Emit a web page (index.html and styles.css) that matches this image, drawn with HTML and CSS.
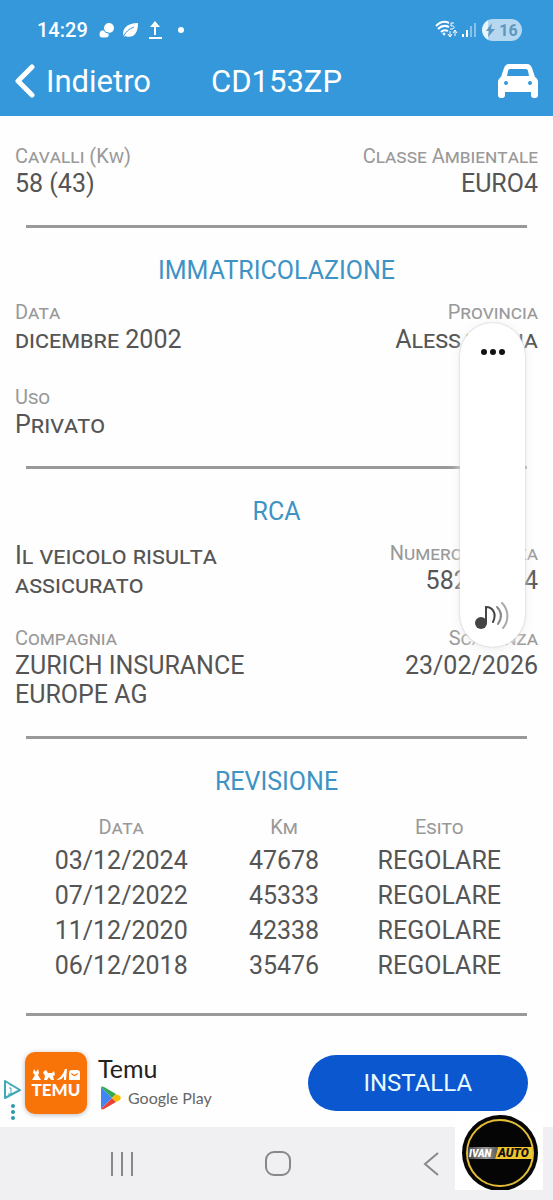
FILE: index.html
```
<!doctype html>
<html lang="it">
<head>
	<meta charset="UTF-8">
	<meta name="viewport" content="width=device-width,initial-scale=1.0">
	<title>CD153ZP</title>
	<link rel="stylesheet" href="styles.css">
</head>
<body>
	<header class="head">
		<div class="status">
			<span class="time">14:29</span>
			<svg class="status_icons" width="88" height="22" viewBox="0 0 88 22" fill="#fff">
				<circle cx="11" cy="9" r="5"/>
				<path d="M1 15a4 4 0 0 1 5-4c1 2 2 3 5 3 1 3-1 5-3 5H4c-2 0-3-2-3-4z" stroke="#3498db" stroke-width="1"/>
				<path d="M26 18c-3-7 2-14 14-14 0 11-5 16-13 13z"/>
				<path d="M25 19c2-6 6-9 11-11" fill="none" stroke="#3498db" stroke-width="1"/>
				<path d="M51 18h13v2H51zM56 16V8h-4l5-6 5 6h-4v8z"/>
				<circle cx="83" cy="11" r="3"/>
			</svg>
			<svg class="signal" width="42" height="22" viewBox="0 0 42 22" fill="none" stroke="#fff">
				<path d="M1 7c4-4 9-5 13-3M3 10c3-3 7-4 11-2M6 13c2-2 5-2 7-1" stroke-width="2"/>
				<circle cx="9" cy="15" r="1" fill="#fff"/>
				<path d="M19 4h-3v3c4-1 4 3 1 3h-2" stroke-width="1"/>
				<path d="M15 12v6M13 15l2 3 2-3M20 17v-5M18 14l2-3 2 3" stroke-width="1"/>
				<path d="M28 15v3M32 11v7" stroke-width="2"/>
				<path d="M36 7v11M40 4v14" stroke-width="2" opacity=".4"/>
			</svg>
			<span class="battery">
				<svg width="9" height="14" viewBox="0 0 9 14"><path d="M6 0L0 8h3l-1 6 7-8H5z" fill="#5d97bd"/></svg>
				16
			</span>
		</div>
		<nav class="bar">
			<a href="#" class="back">
				<svg width="20" height="34" viewBox="0 0 20 34"><path d="M17 3L3 17l14 14" fill="none" stroke="#fff" stroke-width="5" stroke-linecap="round" stroke-linejoin="round"/></svg>
				Indietro
			</a>
			<h1 class="plate">CD153ZP</h1>
			<button class="car" aria-label="Veicolo">
				<svg width="40" height="36" viewBox="0 0 40 36">
					<path fill="#fff" fill-rule="evenodd" d="M11 1h18c3 0 4 2 5 4l3 9c2 1 3 3 3 5v13c0 2-1 3-3 3h-1c-2 0-3-1-3-3v-3H7v3c0 2-1 3-3 3H3c-2 0-3-1-3-3V19c0-2 1-4 3-5l3-9c1-2 2-4 5-4zM12 6c-1 0-2 1-2 2l-1 5h22l-1-5c0-1-1-2-2-2zM8 18a2 2 0 1 0 0 4 2 2 0 0 0 0-4zM32 18a2 2 0 1 0 0 4 2 2 0 0 0 0-4z"/>
				</svg>
			</button>
		</nav>
	</header>

	<main class="content">
		<section class="block">
			<dl class="row">
				<div><dt>Cavalli (Kw)</dt><dd>58 (43)</dd></div>
				<div class="right"><dt>Classe Ambientale</dt><dd>EURO4</dd></div>
			</dl>
		</section>

		<section class="block">
			<h2>IMMATRICOLAZIONE</h2>
			<dl class="row">
				<div><dt>Data</dt><dd>dicembre 2002</dd></div>
				<div class="right"><dt>Provincia</dt><dd>Alessandria</dd></div>
			</dl>
			<dl class="row">
				<div><dt>Uso</dt><dd>Privato</dd></div>
			</dl>
		</section>

		<section class="block">
			<h2>RCA</h2>
			<div class="row">
				<p class="insured">Il veicolo risulta assicurato</p>
				<dl class="right"><dt>Numero Polizza</dt><dd>58200004</dd></dl>
			</div>
			<dl class="row">
				<div><dt>Compagnia</dt><dd>ZURICH INSURANCE EUROPE AG</dd></div>
				<div class="right"><dt>Scadenza</dt><dd>23/02/2026</dd></div>
			</dl>
		</section>

		<section class="block">
			<h2>REVISIONE</h2>
			<table class="checks">
				<thead>
					<tr><th class="col_date">Data</th><th class="col_km">Km</th><th>Esito</th></tr>
				</thead>
				<tbody>
					<tr><td>03/12/2024</td><td>47678</td><td>REGOLARE</td></tr>
					<tr><td>07/12/2022</td><td>45333</td><td>REGOLARE</td></tr>
					<tr><td>11/12/2020</td><td>42338</td><td>REGOLARE</td></tr>
					<tr><td>06/12/2018</td><td>35476</td><td>REGOLARE</td></tr>
				</tbody>
			</table>
		</section>
	</main>

	<!-- banner -->
	<aside class="ad">
		<svg class="ad_choices" width="18" height="44" viewBox="0 0 18 44">
			<path d="M2 4l15 9-15 8z" fill="none" stroke="#3fa9b5" stroke-width="2" stroke-linejoin="round"/>
			<path d="M6 11h2v6M5 17h5M7 8h2" fill="none" stroke="#3fa9b5" stroke-width="1"/>
			<g fill="#2e9aa8"><circle cx="10" cy="29" r="2"/><circle cx="10" cy="35" r="2"/><circle cx="10" cy="41" r="2"/></g>
		</svg>
		<div class="ad_logo">
			<svg width="48" height="12" viewBox="0 0 48 12" fill="#fff">
				<path d="M2 0l2 3 2-3 1 4-1 2 3 5H0l3-5-2-2z"/>
				<path d="M11 3l3-2 2 3h4l2-2 1 4-2 1 1 4h-3l-2-3-2 3h-3l1-4z"/>
				<path d="M33 0h2l-1 11h-2V7c-2 3-4 4-8 4 4-2 7-5 9-11z"/>
				<path fill-rule="evenodd" d="M40 1h5c2 0 3 1 3 3v7H37V4c0-2 1-3 3-3zM39 4c1 4 6 4 7 0h-1c-1 2-4 2-5 0z"/>
			</svg>
			<span>TEMU</span>
		</div>
		<div class="ad_text">
			<strong class="ad_name">Temu</strong>
			<span class="store">
				<svg width="21" height="24" viewBox="0 0 21 24">
					<path d="M1 1v22l11-11z" fill="#4285f4"/>
					<path d="M1 1c1-1 2 0 3 0l12 7-4 4z" fill="#34a853"/>
					<path d="M1 23c1 1 2 0 3 0l12-7-4-4z" fill="#ea4335"/>
					<path d="M16 8l4 2c1 1 1 3 0 4l-4 2-4-4z" fill="#fbbc04"/>
				</svg>
				Google Play
			</span>
		</div>
		<button class="install">INSTALLA</button>
	</aside>

	<footer class="keys">
		<button aria-label="Recenti"><svg width="24" height="26" viewBox="0 0 24 26"><path d="M2 1v24M12 1v24M22 1v24"/></svg></button>
		<button aria-label="Home"><svg width="26" height="26" viewBox="0 0 26 26"><rect x="1" y="1" width="24" height="23" rx="8"/></svg></button>
		<button aria-label="Indietro"><svg width="18" height="26" viewBox="0 0 18 26"><path d="M16 2L3 13l13 11"/></svg></button>
		<div class="sticker">
			<svg width="88" height="76" viewBox="0 0 88 76">
				<defs>
					<linearGradient id="steel"><stop offset="0" stop-color="#444"/><stop offset=".6" stop-color="#999"/><stop offset="1" stop-color="#555"/></linearGradient>
				</defs>
				<circle cx="45" cy="39" r="38" fill="#050505"/>
				<circle cx="45" cy="39" r="33" fill="none" stroke="#e3bd35" stroke-width="2"/>
				<path d="M13 33h30l-3 12H13z" fill="url(#steel)"/>
				<path d="M43 33h34v12H40z" fill="#f0c52e"/>
				<g font-family="Roboto, sans-serif" font-weight="900" font-style="italic">
					<text x="14" y="43" font-size="10" fill="#fff">IVAN</text>
					<text x="43" y="43" font-size="12" fill="#111">AUTO</text>
				</g>
			</svg>
		</div>
	</footer>

	<!-- volume panel -->
	<div class="volume">
		<button aria-label="Altro">
			<svg width="26" height="8" viewBox="0 0 26 8" fill="#111"><circle cx="4" cy="4" r="3"/><circle cx="13" cy="4" r="3"/><circle cx="22" cy="4" r="3"/></svg>
		</button>
		<button aria-label="Suono">
			<svg width="38" height="30" viewBox="0 0 38 30" fill="none" stroke-linecap="round">
				<circle cx="7" cy="22" r="6" fill="#444"/>
				<path d="M12 22V6c7 0 11 7 7 15" stroke="#444" stroke-width="2"/>
				<path d="M23 6c5 5 5 11 1 17" stroke="#888" stroke-width="2"/>
				<path d="M28 2c7 7 7 18 1 25" stroke="#aaa" stroke-width="2"/>
			</svg>
		</button>
	</div>
</body>
</html>
```
FILE: styles.css
```
*{
	padding: 0;
	margin: 0;
	box-sizing: border-box;
}
body{
	position: relative;
	min-height: 100vh;
	display: flex;
	flex-direction: column;
	font-family: Roboto, sans-serif;
	font-size: 25px;
	line-height: 29px;
	color: #555;
	background: #fefefe;
}
button{
	border: 0;
	background: none;
	font: inherit;
	color: inherit;
}
svg{
	display: block;
}

/* header */
.head{
	height: 116px;
	padding-top: 18px;
	background: #3498db;
	color: #fff;
}
.status{
	display: flex;
	align-items: center;
	height: 24px;
	padding: 0 31px 0 37px;
}
.time{
	font-size: 20px;
	font-weight: 500;
}
.status_icons{
	margin-left: 10px;
}
.signal{
	margin-left: auto;
}
.battery{
	display: flex;
	align-items: center;
	justify-content: center;
	gap: 4px;
	width: 40px;
	height: 22px;
	margin-left: 5px;
	border-radius: 11px;
	font-size: 16px;
	font-weight: 700;
	color: #5d97bd;
	background: linear-gradient(90deg, #e8f5fc 16%, #b5d8f0 16%);
}
.bar{
	display: grid;
	grid-template-columns: 1fr auto 1fr;
	align-items: center;
	height: 78px;
	padding: 0 15px;
}
.back{
	display: flex;
	align-items: center;
	gap: 11px;
	font-size: 31px;
	color: #fff;
	text-decoration: none;
}
.plate{
	font-size: 31px;
	font-weight: 400;
}
.car{
	justify-self: end;
}

/* vehicle data */
.content{
	padding-top: 28px;
}
.block{
	padding: 0 15px 27px;
}
.block::after{
	content: "";
	display: block;
	height: 3px;
	margin: 27px 11px 0;
	background: #999;
}
.block + .block{
	padding-top: 1px;
}
h2{
	margin-bottom: 15px;
	font-size: 25px;
	font-weight: 400;
	text-align: center;
	color: #3d93c4;
}
.row{
	display: flex;
	justify-content: space-between;
	font-variant: small-caps;
}
.row + .row{
	margin-top: 31px;
}
.row > *{
	width: 50%;
}
.insured{
	margin-bottom: -4px;
}
.right{
	text-align: right;
}
dt{
	font-size: 20px;
	line-height: 25px;
	color: #999;
}
.checks{
	width: calc(100% - 22px);
	margin: 19px 11px 30px;
	table-layout: fixed;
	border-collapse: collapse;
	text-align: center;
}
.checks th{
	height: 28px;
	font-size: 20px;
	font-weight: 400;
	font-variant: small-caps;
	line-height: 25px;
	vertical-align: top;
	color: #999;
}
.checks td{
	height: 35px;
}
.col_date{
	width: 38%;
}
.col_km{
	width: 27%;
}

/* banner */
.ad{
	display: flex;
	align-items: center;
	flex: 1;
	padding: 0 25px 4px 3px;
}
.ad_choices{
	margin-top: 32px;
}
.ad_logo{
	display: flex;
	flex-direction: column;
	align-items: center;
	justify-content: center;
	width: 62px;
	height: 62px;
	margin-left: 4px;
	border-radius: 10px;
	font: 900 17px/17px Lato, sans-serif;
	color: #fff;
	background: #f97408;
	box-shadow: 0 1px 5px #bbb;
}
.ad_text{
	margin-left: 11px;
	font-family: Lato, sans-serif;
}
.ad_name{
	font-weight: 400;
	color: #222;
}
.store{
	display: flex;
	align-items: center;
	gap: 7px;
	padding-left: 2px;
	font-size: 16px;
	color: #666;
}
.install{
	width: 42%;
	height: 56px;
	margin-left: auto;
	border-radius: 28px;
	font-size: 24px;
	color: #e8faff;
	background: #0b57d0;
}

/* system keys */
.keys{
	position: relative;
	display: flex;
	align-items: center;
	justify-content: space-around;
	height: 73px;
	padding: 0 48px 0 44px;
	background: #f0f0f3;
}
.keys button svg{
	fill: none;
	stroke: #888;
	stroke-width: 2;
}
.sticker{
	position: absolute;
	right: 10px;
	bottom: 10px;
	background: #fff;
}

/* lies over the page */
.volume{
	position: absolute;
	top: 323px;
	right: 28px;
	display: flex;
	flex-direction: column;
	align-items: center;
	justify-content: space-between;
	width: 65px;
	height: 324px;
	padding: 25px 0 16px;
	border-radius: 33px;
	background: #fff;
	box-shadow: 0 0 2px #bbb, 0 2px 12px #eee;
}
```
